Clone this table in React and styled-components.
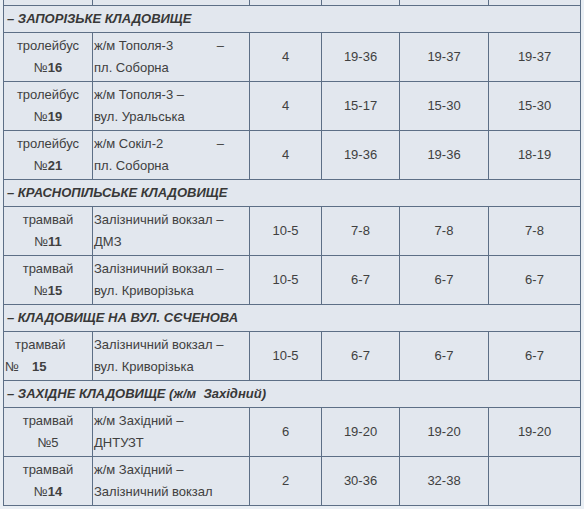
import styled, { createGlobalStyle } from "styled-components";

const Global = createGlobalStyle`
  html, body {
    margin: 0;
    padding: 0;
    background: #eaeff4;
    overflow: hidden;
  }
`;

const sections = [
  {
    title: "– ЗАПОРІЗЬКЕ КЛАДОВИЩЕ",
    rows: [
      { kind: "тролейбус", num: "16", route: ["ж/м Тополя-3", "–", "пл. Соборна"], t: ["4", "19-36", "19-37", "19-37"] },
      { kind: "тролейбус", num: "19", route: ["ж/м Тополя-3 –", null, "вул. Уральська"], t: ["4", "15-17", "15-30", "15-30"] },
      { kind: "тролейбус", num: "21", route: ["ж/м Сокіл-2", "–", "пл. Соборна"], t: ["4", "19-36", "19-36", "18-19"] },
    ],
  },
  {
    title: "– КРАСНОПІЛЬСЬКЕ КЛАДОВИЩЕ",
    rows: [
      { kind: "трамвай", num: "11", route: ["Залізничний вокзал –", null, "ДМЗ"], t: ["10-5", "7-8", "7-8", "7-8"] },
      { kind: "трамвай", num: "15", route: ["Залізничний вокзал –", null, "вул. Криворізька"], t: ["10-5", "6-7", "6-7", "6-7"] },
    ],
  },
  {
    title: "– КЛАДОВИЩЕ НА ВУЛ. СЄЧЕНОВА",
    rows: [
      { kind: "трамвай", num: "15", loose: true, route: ["Залізничний вокзал –", null, "вул. Криворізька"], t: ["10-5", "6-7", "6-7", "6-7"] },
    ],
  },
  {
    title: "– ЗАХІДНЕ КЛАДОВИЩЕ (ж/м\u00a0 Західний)",
    rows: [
      { kind: "трамвай", num: "5", plain: true, route: ["ж/м Західний –", null, "ДНТУЗТ"], t: ["6", "19-20", "19-20", "19-20"] },
      { kind: "трамвай", num: "14", route: ["ж/м Західний –", null, "Залізничний вокзал"], t: ["2", "30-36", "32-38", ""] },
    ],
  },
];

export default function App() {
  return (
    <Page>
      <Global />
      <Table>
        <colgroup>
          <col style={{ width: 89 }} />
          <col style={{ width: 157 }} />
          <col style={{ width: 72 }} />
          <col style={{ width: 78 }} />
          <col style={{ width: 89 }} />
          <col style={{ width: 92 }} />
        </colgroup>
        <tbody>
          <tr>
            <Cell />
            <Cell />
            <Cell />
            <Cell />
            <Cell />
            <Cell />
          </tr>
          {sections.map((s) => (
            <Section key={s.title} section={s} />
          ))}
        </tbody>
      </Table>
    </Page>
  );
}

function Section({ section }) {
  return (
    <>
      <tr>
        <SectionCell colSpan={6}>{section.title}</SectionCell>
      </tr>
      {section.rows.map((r, i) => (
        <tr key={i}>
          {r.loose ? (
            <Cell $left>
              <Indent>{r.kind}</Indent>
              <br />
              №<Num $gap>{r.num}</Num>
            </Cell>
          ) : (
            <Cell $center>
              {r.kind}
              <br />
              №<Num $plain={r.plain}>{r.num}</Num>
            </Cell>
          )}
          <Cell $left>
            {r.route[1] ? (
              <RouteLine>
                <span>{r.route[0]}</span>
                <span>{r.route[1]}</span>
              </RouteLine>
            ) : (
              <>
                {r.route[0]}
                <br />
              </>
            )}
            {r.route[2]}
          </Cell>
          {r.t.map((v, j) => (
            <Cell $center key={j}>{v}</Cell>
          ))}
        </tr>
      ))}
    </>
  );
}

const Page = styled.div`
  padding-left: 3px;
  margin-top: -44px;
`;

const Table = styled.table`
  border-collapse: collapse;
  table-layout: fixed;
  width: 577px;
  background: #e2e7ee;
  font-family: "Liberation Sans", Arial, sans-serif;
  font-size: 13px;
  color: #404040;
`;

const Cell = styled.td`
  border: 1px solid #5d6f86;
  padding: 2px 1px;
  height: 44px;
  line-height: 22px;
  text-align: ${(p) => (p.$left ? "left" : "center")};
  vertical-align: middle;
`;

const SectionCell = styled.td`
  border: 1px solid #5d6f86;
  padding: 2px 3px;
  line-height: 22px;
  font-weight: bold;
  font-style: italic;
  font-size: 13px;
  color: #383838;
  text-align: left;
`;

const Num = styled.b`
  font-weight: ${(p) => (p.$plain ? "normal" : "bold")};
  margin-left: ${(p) => (p.$gap ? "13px" : "0")};
`;

const Indent = styled.span`
  margin-left: 10px;
`;

const RouteLine = styled.span`
  display: flex;
  justify-content: space-between;
  width: 130px;
`;
